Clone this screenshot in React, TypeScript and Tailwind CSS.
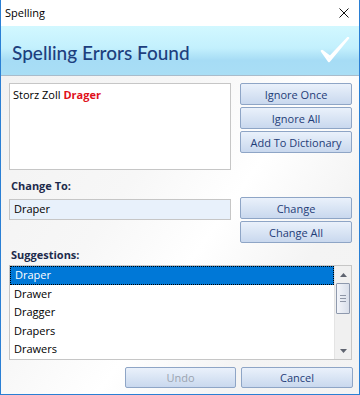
const font = { fontFamily: '"Open Sans", "Noto Sans", sans-serif' };

function DialogButton({ label, disabled = false, className = '' }: { label: string; disabled?: boolean; className?: string }) {
  return (
    <div
      className={`flex items-center justify-center rounded-[2px] border border-[#8ea5c6] bg-[linear-gradient(to_bottom,#eaf1fb_0%,#dbe6f5_45%,#c9d8ee_100%)] text-[11px] leading-none ${
        disabled ? 'text-[#9aa3b0]' : 'text-[#1f3d78]'
      } ${className}`}
    >
      {label}
    </div>
  );
}

function CheckMark() {
  return (
    <svg width="30" height="28" viewBox="0 0 30 28">
      <defs>
        <linearGradient id="chk" x1="0" y1="0" x2="0" y2="1">
          <stop offset="0" stopColor="#ffffff" />
          <stop offset="1" stopColor="#e8f6fc" />
        </linearGradient>
      </defs>
      <path d="M2 14 L9 24 L28 1 L10 20 Z" fill="url(#chk)" stroke="#ffffff" strokeWidth="2.5" strokeLinejoin="round" />
    </svg>
  );
}

function ScrollBar() {
  return (
    <div className="flex h-full w-[17px] flex-col items-center border-l border-[#e4e4e4] bg-[#f0f0f0]">
      <div className="flex h-[17px] w-full items-center justify-center">
        <svg width="7" height="4" viewBox="0 0 7 4">
          <path d="M0 4 L3.5 0 L7 4 Z" fill="#5f6470" />
        </svg>
      </div>
      <div className="flex h-[31px] w-[14px] flex-col items-center justify-center gap-[2px] rounded-[1px] border border-[#8e99ad] bg-[linear-gradient(to_right,#f3f5fa,#d9dfea)]">
        <div className="h-px w-[6px] bg-[#8e96a6]" />
        <div className="h-px w-[6px] bg-[#8e96a6]" />
        <div className="h-px w-[6px] bg-[#8e96a6]" />
      </div>
      <div className="flex-1" />
      <div className="flex h-[17px] w-full items-center justify-center">
        <svg width="7" height="4" viewBox="0 0 7 4">
          <path d="M0 0 L3.5 4 L7 0 Z" fill="#5f6470" />
        </svg>
      </div>
    </div>
  );
}

export default function App() {
  const suggestions = ['Draper', 'Drawer', 'Dragger', 'Drapers', 'Drawers'];

  return (
    <div className="flex h-[395px] w-[360px] flex-col border-x border-b border-[#2a7fd4] bg-white" style={font}>
      <div className="flex h-[26px] items-center justify-between bg-white pl-[4px] pr-[10px] text-[11px] text-black">
        <span>Spelling</span>
        <svg width="10" height="10" viewBox="0 0 10 10">
          <path d="M0.5 0.5 L9.5 9.5 M9.5 0.5 L0.5 9.5" stroke="#111" strokeWidth="1" />
        </svg>
      </div>

      <div className="flex h-[50px] items-center justify-between border-b border-[#a9bccb] bg-[linear-gradient(to_bottom,#d2f8ff_0%,#c3f0fd_45%,#a6dcf5_70%,#a9def5_100%)] pl-[11px] pr-[9px]">
        <span className="pt-[3px] text-[19px] font-medium leading-none text-[#1d3f7e]" style={{ fontFamily: 'Lato, "Open Sans", sans-serif' }}>
          Spelling Errors Found
        </span>
        <CheckMark />
      </div>

      <div className="flex flex-1 flex-col bg-[linear-gradient(125deg,#f2f2f2_0%,#f7f7f7_35%,#ffffff_55%,#f4f4f4_75%,#f3f3f3_100%)] pl-[8px] pt-[7px]">
        <div className="flex gap-[9px]">
          <div className="h-[87px] w-[222px] border border-[#c6c6c6] bg-white px-[3px] pt-[3px] text-[11px] leading-[16px] text-black">
            Storz Zoll <span className="font-bold text-[#e0101a]">Drager</span>
          </div>
          <div className="flex w-[112px] flex-col gap-[2px]">
            <DialogButton label="Ignore Once" className="h-[22px]" />
            <DialogButton label="Ignore All" className="h-[22px]" />
            <DialogButton label="Add To Dictionary" className="h-[22px]" />
          </div>
        </div>

        <div className="mt-[8px] h-[16px] pl-[2px] text-[11px] font-bold leading-[16px] text-[#1d2b4c]">Change To:</div>

        <div className="mt-[3px] flex gap-[9px]">
          <div className="mt-[2px] flex h-[21px] w-[222px] items-center border border-[#c6c6c6] bg-[#e8f1fb] px-[4px] text-[11px] text-black">
            Draper
          </div>
          <div className="flex w-[112px] flex-col gap-[2px]">
            <DialogButton label="Change" className="h-[22px]" />
            <DialogButton label="Change All" className="h-[22px]" />
          </div>
        </div>

        <div className="mt-[4px] h-[16px] pl-[2px] text-[11px] font-bold leading-[16px] text-[#1d2b4c]">Suggestions:</div>

        <div className="mt-[2px] flex h-[95px] w-[343px] border border-[#c6c6c6] bg-white">
          <div className="flex flex-1 flex-col">
            {suggestions.map((s, i) => (
              <div
                key={s}
                className={`flex h-[19px] items-center px-[4px] text-[11px] ${
                  i === 0 ? 'border border-dotted border-black bg-[#0078d7] text-white' : 'text-black'
                }`}
              >
                {s}
              </div>
            ))}
          </div>
          <ScrollBar />
        </div>

        <div className="mt-[7px] flex justify-end gap-[5px] pr-[6px]">
          <DialogButton label="Undo" disabled className="h-[21px] w-[111px]" />
          <DialogButton label="Cancel" className="h-[21px] w-[112px]" />
        </div>
      </div>
    </div>
  );
}
